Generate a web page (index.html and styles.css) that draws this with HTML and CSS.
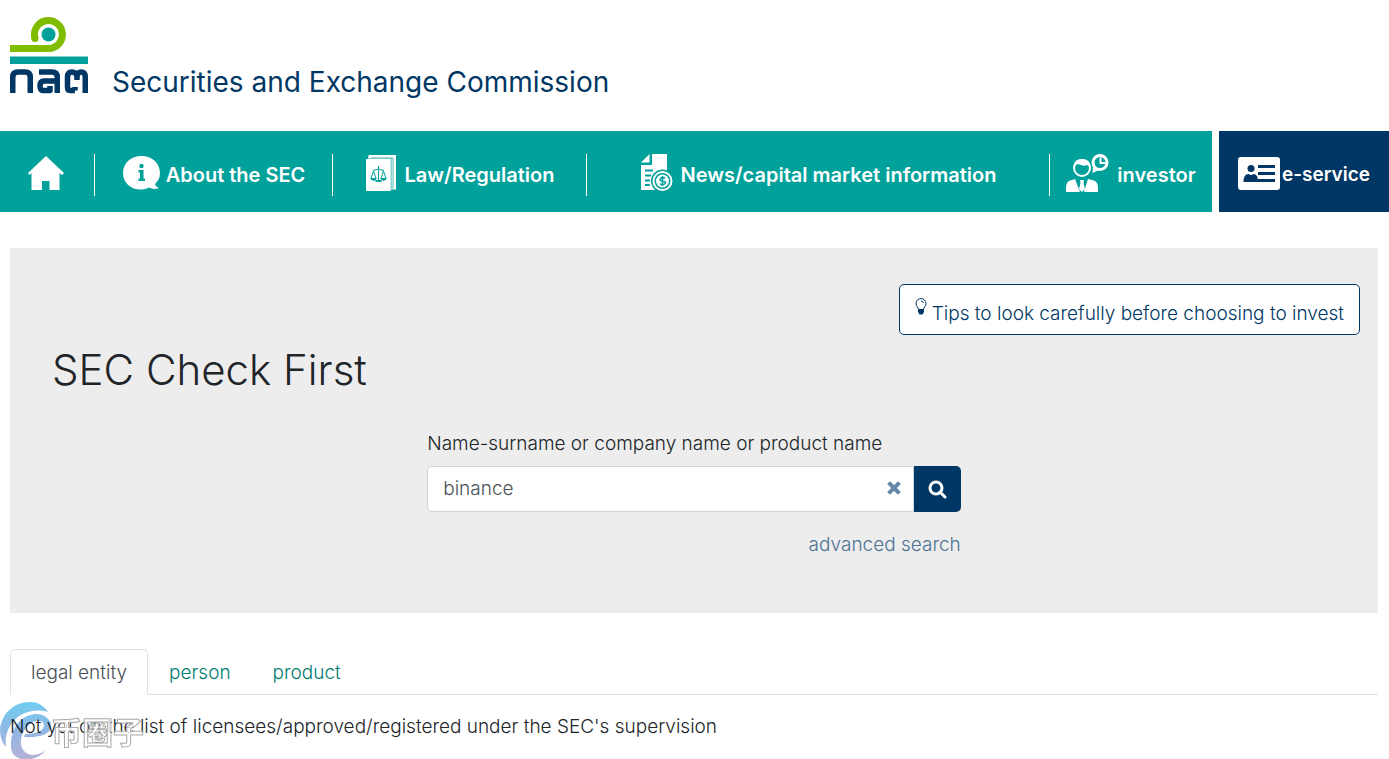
FILE: index.html
```
<!DOCTYPE html>
<html lang="en">
<head>
	<meta charset="utf-8">
	<meta name="viewport" content="width=device-width, initial-scale=1">
	<title>SEC Check First</title>
	<link rel="stylesheet" href="styles.css">
</head>
<body>

	<!-- Logo and site name -->
	<header class="site-header">
		<svg class="logo" viewBox="0 0 78 78" width="78" height="78" role="img" aria-label="SEC logo">
			<path d="M25 22.500A14 14 0 1 1 38.500 32.500H0" fill="none" stroke="#80bc00" stroke-width="7"/>
			<circle cx="25" cy="22.500" r="3.500" fill="#80bc00"/>
			<circle cx="38.500" cy="18.500" r="7" fill="#00a19b"/>
			<path d="M0 40.500H78V48H0Z" fill="#00a19b"/>
			<g fill="none" stroke="#003764" stroke-width="5.500" stroke-linejoin="round">
				<path d="M2.750 77V61Q2.750 56 8 56H15Q20.250 56 20.250 61V77"/>
				<path d="M29 56H42Q47.250 56 47.250 61V77M47 65H34Q30 65 30 70T34 74.500H40V70"/>
				<path d="M65 74.500H60Q57.500 74.500 57.500 71V61Q57.500 56 62 56Q66 56 67 60Q68 56 71 56Q75.250 56 75.250 61V77M67 59V64M65 74.500V71"/>
			</g>
		</svg>
		<span class="site-name">Securities and Exchange Commission</span>
	</header>

	<!-- Main menu -->
	<nav class="main-nav">
		<a class="nav-item nav-home" href="#" aria-label="Home">
			<svg width="36" height="34" viewBox="0 0 36 34" fill="#fff"><path d="M18 0L36 17L34 19L31.500 17V34H21.500V25H14V34H3.500V17L1.500 19L0 17Z"/></svg>
		</a>
		<a class="nav-item nav-about" href="#">
			<svg width="38" height="34" viewBox="0 0 38 34">
				<path d="M18.500 0C29 0 37 7 37 17C37 21 35.500 25 32 28C32.500 30 34 31 36 32C32 33.500 29 33 26 31.500C15 37 0 31 0 17C0 7 8 0 18.500 0Z" fill="#fff"/>
				<circle cx="18.500" cy="10" r="2.200" fill="#00a19b"/>
				<path d="M15.500 14H20.500V22.500H22V25H15.500V22.500H17V16.500H15.500Z" fill="#00a19b"/>
			</svg>
			<span>About the SEC</span>
		</a>
		<a class="nav-item nav-law" href="#">
			<svg width="30" height="36" viewBox="0 0 30 36" fill="none">
				<path d="M2.500 0H30V35H2Z" fill="#8fd3d0"/>
				<path d="M3 0H30V34H26V3H2Z" fill="#fff"/>
				<path d="M5 3H27V34" stroke="#55bdb9"/>
				<path d="M0 4H24.500V36H0Z" fill="#fff"/>
				<path d="M12.500 11V25M7 15.500L12.500 14L18 15.500M7.500 16L5 23.500M7.500 16L10 23.500M17.500 16L15 23.500M17.500 16L20 23.500" stroke="#00a19b"/>
				<path d="M4 23H11Q7.500 29 4 23M14 23H21Q17.500 29 14 23M9.500 25H15.500V27H9.500Z" fill="#00a19b"/>
			</svg>
			<span>Law/Regulation</span>
		</a>
		<a class="nav-item nav-news" href="#">
			<svg width="32" height="38" viewBox="0 0 32 38">
				<path d="M11 0H26V36H0V11H11Z" fill="#fff"/>
				<path d="M8.500 0V8.500H0Z" fill="#fff"/>
				<path d="M4 16.500H12M4 21.500H10M4 26.500H9M4 31H9" stroke="#00a19b" stroke-width="2"/>
				<circle cx="21.500" cy="27" r="11.500" fill="#00a19b"/>
				<circle cx="21.500" cy="27" r="9" fill="#00a19b" stroke="#fff" stroke-width="2"/>
				<circle cx="21.500" cy="27" r="6.500" fill="#fff"/>
				<path d="M24 24.500Q21.500 22.500 19.500 24.500T22 27.200T23.500 30T19 29.500M21.500 22V32" fill="none" stroke="#00a19b" stroke-width="1.500"/>
			</svg>
			<span>News/capital market information</span>
		</a>
		<a class="nav-item nav-investor" href="#">
			<svg width="43" height="38" viewBox="0 0 43 38">
				<circle cx="16" cy="14" r="8" fill="none" stroke="#fff" stroke-width="2"/>
				<path d="M8 12Q8 5 16 5T24 12L20 11L18 12L12 10Z" fill="#fff"/>
				<path d="M0 38V33Q0 27 6 26L9 25L14 38ZM32 38V33Q32 27 26 26L22 25L18 38ZM14 26H18L17.500 29L19 35L16 38L13 35L14.500 29Z" fill="#fff"/>
				<circle cx="34" cy="8.500" r="7" fill="none" stroke="#fff" stroke-width="3"/>
				<path d="M27 12L26.500 19L33 16Z" fill="#fff"/>
				<path d="M34.500 3.500V9H39.500" fill="none" stroke="#fff" stroke-width="2"/>
			</svg>
			<span>investor</span>
		</a>
		<a class="nav-item nav-service" href="#">
			<svg width="42" height="33" viewBox="0 0 42 33">
				<rect width="42" height="33" rx="3" fill="#fff"/>
				<circle cx="13" cy="11.500" r="3.500" fill="#003764"/>
				<path d="M5.500 25Q5.500 17 10.500 17Q13 19 15.500 17Q20 17 20 25Z" fill="#003764"/>
				<path d="M20 9.500H37M20 16.500H37M20 23.500H37" stroke="#003764" stroke-width="3"/>
			</svg>
			<span>e-service</span>
		</a>
	</nav>

	<main class="content">
		<!-- Search panel -->
		<section class="search-panel">
			<div class="tips-row">
				<button type="button" class="tips-btn">
					<svg width="12" height="17" viewBox="0 0 12 17">
						<path d="M3.500 11.500C3.500 9.500 1 8.500 1 5.500A5 5 0 0 1 11 5.500C11 8.500 8.500 9.500 8.500 11.500Z" fill="none" stroke="#003764"/>
						<path d="M6 3Q8 3 8.500 5" fill="none" stroke="#003764"/>
						<path d="M3 11H9V14L7.500 16.500H4.500L3 14Z" fill="#003764"/>
					</svg>
					<span>Tips to look carefully before choosing to invest</span>
				</button>
			</div>
			<h1 class="page-title">SEC Check First</h1>
			<form class="search-form">
				<label for="keyword">Name-surname or company name or product name</label>
				<div class="input-group">
					<input type="text" id="keyword" name="keyword" value="binance" autocomplete="off">
					<button type="reset" class="clear-btn" aria-label="Clear">
						<svg width="14" height="14" viewBox="0 0 14 14"><path d="M3 3L11 11M11 3L3 11" stroke="#6689a8" stroke-width="4" stroke-linecap="square"/></svg>
					</button>
					<button type="submit" class="search-btn" aria-label="Search">
						<svg width="19" height="19" viewBox="0 0 19 19" fill="none" stroke="#fff" stroke-width="3"><circle cx="8" cy="8" r="6"/><path d="M12 12L17 17" stroke-linecap="round"/></svg>
					</button>
				</div>
				<a class="advanced-link" href="#">advanced search</a>
			</form>
		</section>

		<!-- Result tabs -->
		<div class="tabs" role="tablist">
			<a class="tab active" href="#" role="tab" aria-selected="true">legal entity</a>
			<a class="tab" href="#" role="tab" aria-selected="false">person</a>
			<a class="tab" href="#" role="tab" aria-selected="false">product</a>
		</div>
		<p class="result">Not yet on the list of licensees/approved/registered under the SEC's supervision</p>
	</main>

	<!-- Corner watermark -->
	<svg class="watermark-logo" width="52" height="58" viewBox="0 0 52 58">
		<defs>
			<linearGradient id="swirl" gradientUnits="userSpaceOnUse" x1="0" y1="0" x2="0" y2="58">
				<stop offset="0" stop-color="#6fcdf2"/>
				<stop offset="0.500" stop-color="#90b8e4"/>
				<stop offset="1" stop-color="#b5b0d6"/>
			</linearGradient>
		</defs>
		<path d="M6 46C-8 30 4 1 30 1C39 1 45 6 48 11C24 4 3 22 6 46Z" fill="url(#swirl)"/>
		<path d="M11 47C10 28 20 14 36 13C44 13 50 18 51 23C53 32 42 37 24 36L25 33C36 33 44 30 44 24C44 19 36 18 30 23C20 31 18 45 25 51C31 56 40 54 46 49C35 63 12 61 11 47Z" fill="url(#swirl)"/>
	</svg>
	<span class="watermark-text">币圈子</span>

</body>
</html>
```

FILE: styles.css
```
* {
	box-sizing: border-box;
}

body {
	margin: 0;
	background-color: #fff;
	color: #212529;
	font-family: Inter, "Noto Sans", sans-serif;
	font-size: 19px;
	font-weight: 300;
	line-height: 28px;
}

a {
	text-decoration: none;
}

button,
input {
	font: inherit;
}

svg {
	display: block;
	flex: none;
}

/* Logo and site name */
.site-header {
	display: flex;
	align-items: flex-end;
	gap: 24px;
	padding: 16px 10px 37px;
}

.site-name {
	color: #003764;
	font-size: 28px;
	font-weight: 400;
	line-height: 24px;
}

/* Main menu */
.main-nav {
	display: grid;
	grid-template-columns: 95fr 238fr 254fr 463fr 162fr 177fr;
	height: 81px;
}

.nav-item {
	display: flex;
	align-items: center;
	justify-content: center;
	gap: 5px;
	position: relative;
	padding-top: 3px;
	background-color: #00a19b;
	color: #fff;
	font-size: 20px;
	font-weight: 600;
	white-space: nowrap;
}

.nav-item span {
	padding-top: 3px;
}

/* Thin line between two items */
.nav-home::after,
.nav-about::after,
.nav-law::after,
.nav-news::after {
	content: "";
	position: absolute;
	top: 23px;
	right: 0;
	width: 1px;
	height: 42px;
	background-color: #fff;
}

.nav-home {
	padding-right: 3px;
}

.nav-law {
	gap: 9px;
}

.nav-news {
	gap: 8px;
}

.nav-investor {
	gap: 8px;
}

.nav-service {
	gap: 2px;
	margin-left: 7px;
	background-color: #003764;
	font-size: 19px;
}

/* Search panel */
.content {
	padding: 36px 11px 16px 10px;
}

.search-panel {
	padding: 36px 0 54px;
	background-color: #ededed;
}

.tips-row {
	display: flex;
	justify-content: flex-end;
	padding: 0 18px;
}

.tips-btn {
	display: flex;
	gap: 5px;
	padding: 13px 15px 6px;
	border: 1px solid #003764;
	border-radius: 5px;
	background-color: #fff;
	color: #003764;
	cursor: pointer;
}

.tips-btn span {
	padding-top: 2px;
}

.page-title {
	margin: 11px 42px 36px;
	font-size: 42px;
	font-weight: 300;
	line-height: 48px;
}

.search-form {
	display: flex;
	flex-direction: column;
	width: 39%;
	min-width: 320px;
	margin: 0 auto;
}

.search-form label {
	margin-bottom: 8px;
	white-space: nowrap;
}

.input-group {
	display: flex;
	position: relative;
	height: 46px;
}

.input-group input {
	flex: 1;
	min-width: 0;
	padding: 0 48px 0 15px;
	border: 1px solid #ced4da;
	border-radius: 5px 0 0 5px;
	background-color: #fff;
	color: #495057;
}

.clear-btn {
	position: absolute;
	top: 15px;
	right: 60px;
	padding: 0;
	border: none;
	background: none;
	cursor: pointer;
}

.search-btn {
	display: flex;
	align-items: center;
	justify-content: center;
	width: 47px;
	border: none;
	border-radius: 0 5px 5px 0;
	background-color: #003764;
	cursor: pointer;
}

.advanced-link {
	align-self: flex-end;
	margin-top: 19px;
	color: #4d7392;
}

/* Result tabs */
.tabs {
	display: flex;
	margin-top: 36px;
	border-bottom: 1px solid #dee2e6;
}

.tab {
	margin-bottom: -1px;
	padding: 9px 20px 7px;
	border: 1px solid transparent;
	border-radius: 5px 5px 0 0;
	color: #007b70;
}

.tab.active {
	border-color: #dee2e6 #dee2e6 #fff;
	background-color: #fff;
	color: #495057;
}

.result {
	margin: 18px 0 0;
}

/* Corner watermark */
.watermark-logo {
	position: fixed;
	left: 0;
	bottom: 0;
	mix-blend-mode: multiply;
	pointer-events: none;
}

.watermark-text {
	position: fixed;
	left: 51px;
	bottom: 14px;
	color: rgba(255, 255, 255, 0.8);
	font-family: "Noto Sans CJK SC", sans-serif;
	font-size: 31px;
	font-weight: 700;
	-webkit-text-stroke: 1px #aaa;
	pointer-events: none;
}
```
